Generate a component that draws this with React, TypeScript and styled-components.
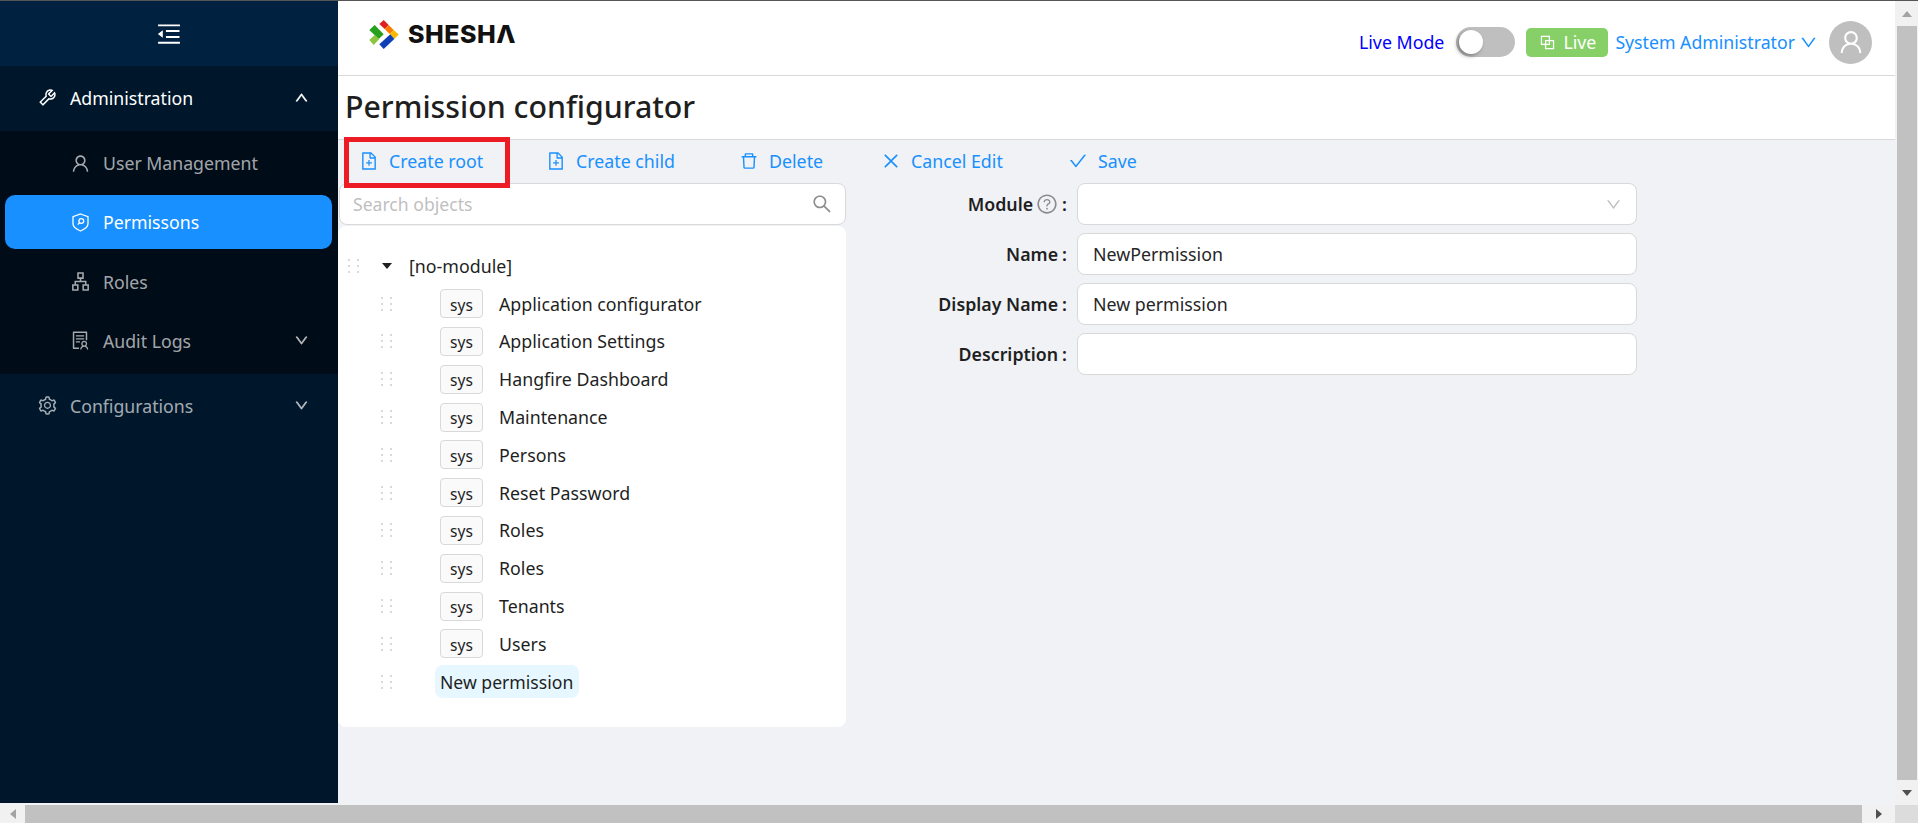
import React from 'react';
import styled, { createGlobalStyle } from 'styled-components';
import {
  AiOutlineApartment, AiOutlineBlock, AiOutlineCheck, AiOutlineClose, AiOutlineDelete, AiOutlineDown,
  AiOutlineFileAdd, AiOutlineMenuFold, AiOutlineQuestionCircle, AiOutlineSearch, AiOutlineSetting,
  AiOutlineSolution, AiOutlineTool, AiOutlineUp, AiOutlineUser,
} from 'react-icons/ai';

const Global = createGlobalStyle`
  html, body { margin: 0; padding: 0; height: 100%; overflow: hidden; background: #fff; }
  body { font-family: "Noto Sans", "Open Sans", Arial, sans-serif; font-size: 17.8px; color: #1f1f1f; }
  * { box-sizing: border-box; }
`;

const Page = styled.div`
  width: 1918px; height: 823px; display: grid;
  grid-template-columns: 1895px 23px; grid-template-rows: 804px 18px;
  border-top: 1px solid #555;
`;
const Shell = styled.div`display: flex; background: #f0f2f5; min-height: 0;`;
const Sider = styled.aside`
  width: 338px; height: 802px; flex: none; background: #00172b; color: rgba(255,255,255,.65);
  display: flex; flex-direction: column;
`;
const Trigger = styled.div`
  height: 65px; background: #002140; display: flex; align-items: center; justify-content: center;
  color: #fff; font-size: 28px; padding-right: 1px;
`;
const MenuRow = styled.div<{ $open?: boolean }>`
  height: 65px; display: flex; align-items: center; padding: 0 29px 2px 37px; gap: 12px;
  color: ${p => (p.$open ? '#fff' : 'rgba(255,255,255,.65)')};
  font-size: 17.7px;
  background: ${p => (p.$open ? '#00172b' : 'transparent')};
  svg:first-child { font-size: 21px; flex: none; }
  svg:last-child { margin-left: auto; font-size: 15px; stroke: currentColor; stroke-width: 40; }
`;
const SubMenu = styled.div`
  height: 243px; background: #000c17; display: flex; flex-direction: column; gap: 5.33px; padding: 5px 6px 0 5px;
`;
const SubItem = styled.div<{ $active?: boolean }>`
  height: 54px; flex: none; display: flex; align-items: center; padding-left: 65px; gap: 12px;
  border-radius: 10px; font-size: 17.7px;
  background: ${p => (p.$active ? '#1890ff' : 'transparent')};
  color: ${p => (p.$active ? '#fff' : 'rgba(255,255,255,.65)')};
  svg:first-child { font-size: 21px; flex: none; }
  svg:nth-child(3) { margin-left: auto; margin-right: 23px; font-size: 15px; stroke: currentColor; stroke-width: 40; }
`;
const Main = styled.main`flex: 1; min-width: 0; display: flex; flex-direction: column;`;
const Header = styled.header`
  height: 75px; flex: none; background: #fff; border-bottom: 1px solid #d9d9d9;
  display: flex; align-items: center; padding: 0 23px 0 29px;
`;
const Brand = styled.div`display: flex; align-items: center; gap: 7px; margin-top: -8px;`;
const BrandName = styled.span`
  font-family: "Inter", "Liberation Sans", sans-serif; font-weight: 800; font-size: 25px; letter-spacing: .5px; color: #111;
`;
const HeaderRight = styled.div`margin-left: auto; display: flex; align-items: center; margin-top: 8px;`;
const LiveLabel = styled.span`color: #0000ff; font-size: 17.8px; margin-right: 1px;`;
const Switch = styled.div`
  width: 59px; height: 30px; border-radius: 15px; background: #bfbfbf; margin-left: 11px; padding: 3px;
`;
const Knob = styled.div`
  width: 24px; height: 24px; border-radius: 50%; background: #fff; box-shadow: -2px 2px 4px rgba(0,0,0,.35);
`;
const LiveTag = styled.div`
  margin-left: 11px; height: 29px; width: 82px; border-radius: 5px; background: #87d068; color: #fff;
  display: flex; align-items: center; justify-content: center; gap: 6px; font-size: 17.8px;
  svg { font-size: 19px; }
`;
const UserName = styled.span`
  margin-left: 7px; color: #1890ff; font-size: 17.7px; display: flex; align-items: center; gap: 4px;
  svg { font-size: 19px; }
`;
const Avatar = styled.div`
  margin-left: 11px; width: 43px; height: 43px; border-radius: 50%; background: #bfbfbf; color: #fff;
  display: flex; align-items: center; justify-content: center; font-size: 28px;
`;
const TitleBar = styled.div`
  height: 64px; flex: none; background: #fff; border-bottom: 1px solid #d9d9d9; padding: 0 0 2px 7px;
  display: flex; align-items: center;
`;
const Title = styled.h1`margin: 0; font-size: 30.3px; font-weight: 500; color: #1f1f1f;`;
const Toolbar = styled.div`
  position: relative; height: 43px; flex: none; display: flex; align-items: center; padding: 0 0 1px 21px; color: #1890ff;
`;
const ToolButton = styled.div<{ $w: number }>`
  width: ${p => p.$w}px; flex: none; display: flex; align-items: center; gap: 10px; font-size: 17.8px;
  svg { font-size: 20px; flex: none; }
`;
const Annotation = styled.div`
  position: absolute; left: 6px; top: -3px; width: 166px; height: 51px; border: 5px solid #ed1c24; pointer-events: none;
`;
const Body = styled.div`flex: 1; display: flex; min-height: 0;`;
const LeftCol = styled.div`width: 509px; flex: none;`;
const Search = styled.div`
  margin-left: 1px; width: 507px; height: 42px; border: 1px solid #d9d9d9; border-radius: 8px; background: #fff;
  display: flex; align-items: center; padding: 0 12px 0 13px; color: #bfbfbf; font-size: 17.6px;
  span { flex: 1; }
  svg { color: #8c8c8c; font-size: 22px; }
`;
const TreePanel = styled.div`
  margin-top: 1px; width: 508px; height: 501px; background: #fff; border-radius: 8px; padding-top: 21px;
`;
const TreeRow = styled.div<{ $root?: boolean }>`
  height: 37.8px; display: flex; align-items: center; padding-left: ${p => (p.$root ? 10 : 43)}px;
`;
const Grip = styled.span`
  width: 11px; height: 14px; flex: none; display: grid; grid-template-columns: 2px 2px; justify-content: space-between;
  align-content: space-between;
  i { display: block; width: 2px; height: 2px; background: #d9d9d9; }
`;
const Caret = styled.span`
  margin-left: 23px; width: 0; height: 0; border-left: 5px solid transparent; border-right: 5px solid transparent;
  border-top: 6px solid #1f1f1f; flex: none;
`;
const RootLabel = styled.span`margin-left: 17px;`;
const SysTag = styled.span`
  margin-left: 48px; width: 43px; height: 29px; border: 1px solid #d9d9d9; border-radius: 4px; background: #fafafa;
  display: flex; align-items: center; justify-content: center; font-size: 15.5px; padding-top: 2px; flex: none;
`;
const NodeLabel = styled.span`margin-left: 16px;`;
const Selected = styled.span`
  margin-left: 43px; height: 33px; padding: 0 6px 0 5px; background: #e6f7ff; border-radius: 8px; display: flex; align-items: center;
  font-size: 17.6px;
`;
const Form = styled.div`display: flex; flex-direction: column; gap: 8px;`;
const FormRow = styled.div`display: flex; align-items: center; height: 42px;`;
const Label = styled.label`
  width: 220px; font-weight: 600; display: flex; justify-content: flex-end; align-items: center;
  svg { color: #8c8c8c; font-size: 22px; margin-left: 3px; }
  &::after { content: ':'; margin-left: 4px; }
`;
const Input = styled.div`
  margin-left: 10px; width: 560px; height: 42px; border: 1px solid #d9d9d9; border-radius: 8px; background: #fff;
  display: flex; align-items: center; padding: 0 14px 0 15px; color: #262626;
  svg { margin-left: auto; color: #bfbfbf; font-size: 17px; }
`;
const VScroll = styled.div`
  background: #f1f1f1; display: flex; flex-direction: column; align-items: center; justify-content: space-between;
`;
const Thumb = styled.div<{ $v?: boolean }>`
  background: #c1c1c1;
  ${p => (p.$v ? 'width: 20px; flex: 1; margin: 0 0 0 1px;' : 'height: 18px; flex: 1;')}
`;
const ArrowBtn = styled.div<{ $dir: 'up' | 'down' | 'left' | 'right' }>`
  flex: none; display: flex; align-items: center; justify-content: center;
  ${p => (p.$dir === 'up' || p.$dir === 'down' ? 'height: 25px; width: 23px;' : 'height: 18px; width: ' + (p.$dir === 'left' ? 25 : 33) + 'px;')}
  &::before {
    content: ''; width: 0; height: 0;
    ${p => p.$dir === 'up' && 'border-left: 5px solid transparent; border-right: 5px solid transparent; border-bottom: 6px solid #a3a3a3;'}
    ${p => p.$dir === 'down' && 'border-left: 5px solid transparent; border-right: 5px solid transparent; border-top: 6px solid #505050;'}
    ${p => p.$dir === 'left' && 'border-top: 5px solid transparent; border-bottom: 5px solid transparent; border-right: 6px solid #a3a3a3;'}
    ${p => p.$dir === 'right' && 'border-top: 5px solid transparent; border-bottom: 5px solid transparent; border-left: 6px solid #505050;'}
  }
`;
const HScroll = styled.div`background: #f1f1f1; display: flex;`;
const Corner = styled.div`background: #dcdcdc;`;

const ShieldKey = () => (
  <svg width="21" height="19" viewBox="-1.5 0 21 19" fill="none" stroke="currentColor" strokeWidth="1.3">
    <path d="M9 1 16.5 3.6v7.2c0 3-3.6 5.6-7.5 7.2-3.9-1.6-7.5-4.2-7.5-7.2V3.6z" />
    <circle cx="9.8" cy="8" r="2.4" />
    <path d="M8 9.8 6.3 11.6" />
  </svg>
);

const Logo = () => (
  <svg width="34" height="33" viewBox="5 3 34 33">
    <path d="M17.3 9 21.7 5 26.7 10 22.7 14z" fill="#e0201f" />
    <path d="M22.7 14 26.7 10 31.7 15 27.7 19z" fill="#ff7a00" />
    <path d="M27.7 19 31.7 15 36.7 19.5 32.3 24z" fill="#fbb800" />
    <path d="M17.3 29.3 28.3 19.3 32.3 24 21.7 34z" fill="#0f3fb5" />
    <path d="M7.3 15 12.7 10 21.7 19.3 16.7 24z" fill="#27a01d" />
    <path d="M7.3 25 12.7 20 17.3 24 11.7 30z" fill="#8cc63f" />
  </svg>
);

const Dots = () => (
  <Grip>
    {Array.from({ length: 6 }, (_, i) => <i key={i} />)}
  </Grip>
);

const nodes = [
  'Application configurator', 'Application Settings', 'Hangfire Dashboard', 'Maintenance', 'Persons',
  'Reset Password', 'Roles', 'Roles', 'Tenants', 'Users',
];

export default function App() {
  return (
    <Page>
      <Global />
      <Shell>
        <Sider>
          <Trigger><AiOutlineMenuFold /></Trigger>
          <MenuRow $open><AiOutlineTool /><span>Administration</span><AiOutlineUp /></MenuRow>
          <SubMenu>
            <SubItem><AiOutlineUser /><span>User Management</span></SubItem>
            <SubItem $active><ShieldKey /><span>Permissons</span></SubItem>
            <SubItem><AiOutlineApartment /><span>Roles</span></SubItem>
            <SubItem><AiOutlineSolution /><span>Audit Logs</span><AiOutlineDown /></SubItem>
          </SubMenu>
          <MenuRow><AiOutlineSetting /><span>Configurations</span><AiOutlineDown /></MenuRow>
        </Sider>
        <Main>
          <Header>
            <Brand><Logo /><BrandName>SHESHΛ</BrandName></Brand>
            <HeaderRight>
              <LiveLabel>Live Mode</LiveLabel>
              <Switch><Knob /></Switch>
              <LiveTag><AiOutlineBlock /><span>Live</span></LiveTag>
              <UserName>System Administrator <AiOutlineDown /></UserName>
              <Avatar><AiOutlineUser /></Avatar>
            </HeaderRight>
          </Header>
          <TitleBar><Title>Permission configurator</Title></TitleBar>
          <Toolbar>
            <ToolButton $w={187}><AiOutlineFileAdd /><span>Create root</span></ToolButton>
            <ToolButton $w={193}><AiOutlineFileAdd /><span>Create child</span></ToolButton>
            <ToolButton $w={142}><AiOutlineDelete /><span>Delete</span></ToolButton>
            <ToolButton $w={187}><AiOutlineClose /><span>Cancel Edit</span></ToolButton>
            <ToolButton $w={100}><AiOutlineCheck /><span>Save</span></ToolButton>
            <Annotation />
          </Toolbar>
          <Body>
            <LeftCol>
              <Search><span>Search objects</span><AiOutlineSearch /></Search>
              <TreePanel>
                <TreeRow $root><Dots /><Caret /><RootLabel>[no-module]</RootLabel></TreeRow>
                {nodes.map((n, i) => (
                  <TreeRow key={i}><Dots /><SysTag>sys</SysTag><NodeLabel>{n}</NodeLabel></TreeRow>
                ))}
                <TreeRow><Dots /><Selected>New permission</Selected></TreeRow>
              </TreePanel>
            </LeftCol>
            <Form>
              <FormRow><Label>Module <AiOutlineQuestionCircle /></Label><Input><AiOutlineDown /></Input></FormRow>
              <FormRow><Label>Name</Label><Input>NewPermission</Input></FormRow>
              <FormRow><Label>Display Name</Label><Input>New permission</Input></FormRow>
              <FormRow><Label>Description</Label><Input /></FormRow>
            </Form>
          </Body>
        </Main>
      </Shell>
      <VScroll>
        <ArrowBtn $dir="up" />
        <Thumb $v />
        <ArrowBtn $dir="down" />
      </VScroll>
      <HScroll>
        <ArrowBtn $dir="left" />
        <Thumb />
        <ArrowBtn $dir="right" />
      </HScroll>
      <Corner />
    </Page>
  );
}
